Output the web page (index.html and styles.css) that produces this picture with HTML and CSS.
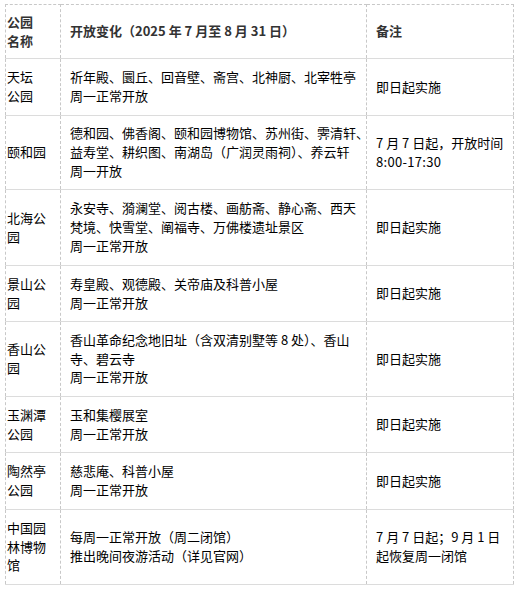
FILE: index.html
```html
<!DOCTYPE html>
<html lang="zh-CN">
<head>
<meta charset="utf-8">
<title>公园开放变化</title>
<link rel="stylesheet" href="styles.css">
</head>
<body>
<div class="wrap">
<table class="parks">
  <colgroup>
    <col class="c-name">
    <col class="c-change">
    <col class="c-note">
  </colgroup>
  <tr class="head h54">
    <td class="name">公园<br>名称</td>
    <td class="change">开放变化（2025 年 7 月至 8 月 31 日）</td>
    <td class="note">备注</td>
  </tr>
  <tr class="h57">
    <td class="name">天坛<br>公园</td>
    <td class="change">祈年殿、圜丘、回音壁、斋宫、北神厨、北宰牲亭<br>周一正常开放</td>
    <td class="note">即日起实施</td>
  </tr>
  <tr class="h74">
    <td class="name">颐和园</td>
    <td class="change">德和园、佛香阁、颐和园博物馆、苏州街、霁清轩、<br>益寿堂、耕织图、南湖岛（广润灵雨祠）、养云轩<br>周一开放</td>
    <td class="note">7 月 7 日起，开放时间<br><span class="num">8:00-17:30</span></td>
  </tr>
  <tr class="h76">
    <td class="name">北海公<br>园</td>
    <td class="change">永安寺、漪澜堂、阅古楼、画舫斋、静心斋、西天<br>梵境、快雪堂、阐福寺、万佛楼遗址景区<br>周一正常开放</td>
    <td class="note">即日起实施</td>
  </tr>
  <tr class="h56">
    <td class="name">景山公<br>园</td>
    <td class="change">寿皇殿、观德殿、关帝庙及科普小屋<br>周一正常开放</td>
    <td class="note">即日起实施</td>
  </tr>
  <tr class="h75">
    <td class="name">香山公<br>园</td>
    <td class="change">香山革命纪念地旧址（含双清别墅等 8 处）、香山<br>寺、碧云寺<br>周一正常开放</td>
    <td class="note">即日起实施</td>
  </tr>
  <tr class="h56">
    <td class="name">玉渊潭<br>公园</td>
    <td class="change">玉和集樱展室<br>周一正常开放</td>
    <td class="note">即日起实施</td>
  </tr>
  <tr class="h57">
    <td class="name">陶然亭<br>公园</td>
    <td class="change">慈悲庵、科普小屋<br>周一正常开放</td>
    <td class="note">即日起实施</td>
  </tr>
  <tr class="h75 last">
    <td class="name">中国园<br>林博物<br>馆</td>
    <td class="change">每周一正常开放（周二闭馆）<br>推出晚间夜游活动（详见官网）</td>
    <td class="note">7 月 7 日起；9 月 1 日<br>起恢复周一闭馆</td>
  </tr>
</table>
</div>
</body>
</html>
```

FILE: styles.css
```css
html, body {
  margin: 0;
  padding: 0;
  background: #ffffff;
}

body {
  font-family: "Noto Sans CJK SC", "Noto Sans", sans-serif;
  font-size: 13px;
  line-height: 18.7px;
  color: #000000;
}

.wrap {
  padding: 4px 0 0 5px;
}

.parks {
  border-collapse: collapse;
  table-layout: fixed;
  width: 508px;
}

.c-name { width: 55px; }
.c-change { width: 306px; }
.c-note { width: 147px; }

.parks td {
  border-left: 1px dashed #c8c8c8;
  border-right: 1px dashed #c8c8c8;
  border-top: 1px solid #dcdcdc;
  border-bottom: 1px solid #dcdcdc;
  padding: 0;
  vertical-align: middle;
  white-space: nowrap;
  overflow: visible;
}

.parks .head td {
  border-top: 1px dashed #c8c8c8;
  font-weight: bold;
  color: #333333;
}

.parks td.name {
  padding-left: 1px;
}

.parks td.change {
  padding-left: 9px;
}

.parks td.note {
  padding-left: 9px;
}

.num {
  letter-spacing: 0.3px;
}

.h54 { height: 54px; }
.h56 { height: 56px; }
.h57 { height: 57px; }
.h74 { height: 74px; }
.h75 { height: 75px; }
.h76 { height: 76px; }
```
